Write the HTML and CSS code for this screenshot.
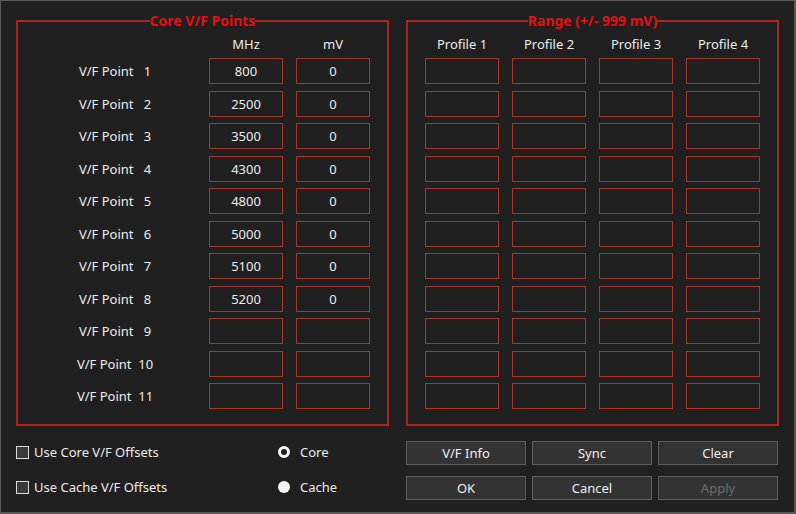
FILE: index.html
```html
<!DOCTYPE html>
<html>
<head>
<meta charset="utf-8">
<link rel="stylesheet" href="styles.css">
</head>
<body>
<div class="window">
  <div class="groups">
    <fieldset class="group core">
      <legend>Core V/F Points</legend>
      <div class="grid core-grid">
        <div></div><div class="head">MHz</div><div class="head">mV</div>
        <div class="lbl">V/F Point&nbsp;&nbsp;&nbsp;1</div><input class="box" value="800"><input class="box" value="0">
        <div class="lbl">V/F Point&nbsp;&nbsp;&nbsp;2</div><input class="box" value="2500"><input class="box" value="0">
        <div class="lbl">V/F Point&nbsp;&nbsp;&nbsp;3</div><input class="box" value="3500"><input class="box" value="0">
        <div class="lbl">V/F Point&nbsp;&nbsp;&nbsp;4</div><input class="box" value="4300"><input class="box" value="0">
        <div class="lbl">V/F Point&nbsp;&nbsp;&nbsp;5</div><input class="box" value="4800"><input class="box" value="0">
        <div class="lbl">V/F Point&nbsp;&nbsp;&nbsp;6</div><input class="box" value="5000"><input class="box" value="0">
        <div class="lbl">V/F Point&nbsp;&nbsp;&nbsp;7</div><input class="box" value="5100"><input class="box" value="0">
        <div class="lbl">V/F Point&nbsp;&nbsp;&nbsp;8</div><input class="box" value="5200"><input class="box" value="0">
        <div class="lbl">V/F Point&nbsp;&nbsp;&nbsp;9</div><input class="box" value=""><input class="box" value="">
        <div class="lbl">V/F Point&nbsp;&nbsp;10</div><input class="box" value=""><input class="box" value="">
        <div class="lbl">V/F Point&nbsp;&nbsp;11</div><input class="box" value=""><input class="box" value="">
      </div>
    </fieldset>
    <fieldset class="group range">
      <legend>Range (+/- 999 mV)</legend>
      <div class="grid range-grid">
        <div class="head">Profile 1</div><div class="head">Profile 2</div><div class="head">Profile 3</div><div class="head">Profile 4</div>
        <input class="box"><input class="box"><input class="box"><input class="box">
        <input class="box"><input class="box"><input class="box"><input class="box">
        <input class="box"><input class="box"><input class="box"><input class="box">
        <input class="box"><input class="box"><input class="box"><input class="box">
        <input class="box"><input class="box"><input class="box"><input class="box">
        <input class="box"><input class="box"><input class="box"><input class="box">
        <input class="box"><input class="box"><input class="box"><input class="box">
        <input class="box"><input class="box"><input class="box"><input class="box">
        <input class="box"><input class="box"><input class="box"><input class="box">
        <input class="box"><input class="box"><input class="box"><input class="box">
        <input class="box"><input class="box"><input class="box"><input class="box">
      </div>
    </fieldset>
  </div>
  <div class="bottom">
    <div class="options">
      <label class="check"><span class="cb"></span>Use Core V/F Offsets</label>
      <label class="radio"><span class="rd ring"></span>Core</label>
      <label class="check"><span class="cb"></span>Use Cache V/F Offsets</label>
      <label class="radio"><span class="rd dot"></span>Cache</label>
    </div>
    <div class="buttons">
      <button class="btn">V/F Info</button>
      <button class="btn">Sync</button>
      <button class="btn">Clear</button>
      <button class="btn">OK</button>
      <button class="btn">Cancel</button>
      <button class="btn disabled">Apply</button>
    </div>
  </div>
</div>
</body>
</html>
```
FILE: styles.css
```css
* { box-sizing: border-box; }
html, body { margin: 0; padding: 0; background: #202020; }
.window {
  width: 796px;
  height: 514px;
  background: #202020;
  border: 1px solid #595959;
  border-right-width: 2px;
  border-bottom-width: 2px;
  padding: 12px 0 0 15px;
  font-family: "Noto Sans", "Open Sans", sans-serif;
  font-size: 13px;
  color: #ececec;
}
.groups {
  display: flex;
  gap: 17px;
}
.group {
  margin: 0;
  padding: 0;
  min-width: 0;
  width: 373px;
  height: 413px;
  border: 2px solid #a92626;
}
.group legend {
  margin: 0 auto;
  padding: 0;
  color: #e01212;
  font-weight: bold;
  font-size: 14px;
  line-height: 16px;
}
.grid {
  display: grid;
  grid-template-rows: 27.5px repeat(11, 26px);
  row-gap: 6.5px;
  column-gap: 13px;
  margin-top: -5px;
}
.core-grid {
  grid-template-columns: 175px 74px 74px;
  padding-left: 3px;
}
.range-grid {
  grid-template-columns: repeat(4, 74px);
  padding-left: 17px;
}
.head {
  text-align: center;
  line-height: 16px;
  padding-top: 12px;
}
.lbl {
  text-align: center;
  line-height: 26px;
  white-space: pre;
  padding-left: 13px;
}
.box {
  width: 74px;
  height: 26px;
  margin: 0;
  padding: 0;
  border: 1px solid #a2392b;
  background: transparent;
  color: #ececec;
  font-family: inherit;
  font-size: 13px;
  text-align: center;
  outline: none;
}
.bottom {
  display: flex;
  gap: 17px;
  margin-top: 15px;
}
.options {
  width: 373px;
  display: grid;
  grid-template-columns: 262px 1fr;
  grid-template-rows: 24px 24px;
  row-gap: 11px;
  margin-top: -1px;
}
.check, .radio {
  display: flex;
  align-items: center;
}
.cb {
  width: 13px;
  height: 13px;
  border: 1px solid #dcdcdc;
  background: #3a3a3a;
  margin-right: 5px;
}
.rd {
  width: 12px;
  height: 12px;
  border-radius: 50%;
  margin-right: 10px;
}
.ring { border: 3px solid #f2f2f2; background: #202020; }
.dot { background: #f4f4f4; }
.buttons {
  width: 372px;
  display: grid;
  grid-template-columns: repeat(3, 120px);
  grid-template-rows: 24px 24px;
  column-gap: 6px;
  row-gap: 11px;
}
.btn {
  margin: 0;
  padding: 0;
  background: #333333;
  border: 1px solid #5e5e5e;
  color: #f0f0f0;
  font-family: inherit;
  font-size: 13px;
}
.btn.disabled { color: #6c6c6c; }
```
